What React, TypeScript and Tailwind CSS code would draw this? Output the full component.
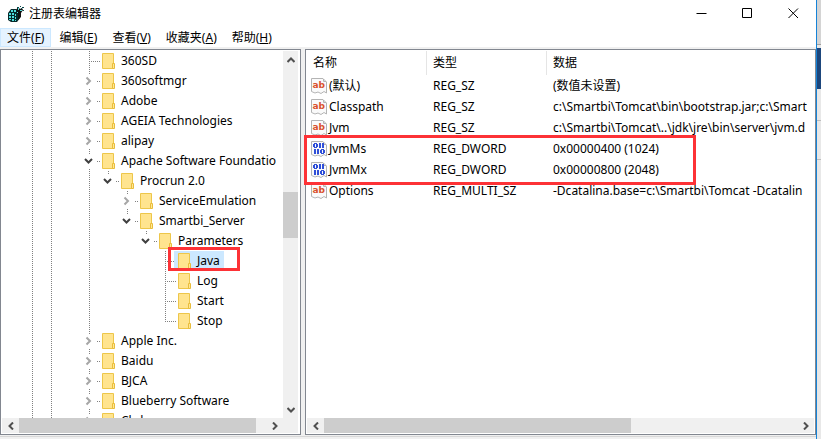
import React from "react";

type Branch = "leaf" | "open" | "closed";
type Node = { name: string; depth: number; branch: Branch; up: boolean; down: boolean; selected?: boolean };

const nodes: Node[] = [
  { name: "360SD", depth: 0, branch: "leaf", up: true, down: true },
  { name: "360softmgr", depth: 0, branch: "closed", up: true, down: true },
  { name: "Adobe", depth: 0, branch: "closed", up: true, down: true },
  { name: "AGEIA Technologies", depth: 0, branch: "closed", up: true, down: true },
  { name: "alipay", depth: 0, branch: "closed", up: true, down: true },
  { name: "Apache Software Foundatio", depth: 0, branch: "open", up: true, down: true },
  { name: "Procrun 2.0", depth: 1, branch: "open", up: true, down: false },
  { name: "ServiceEmulation", depth: 2, branch: "closed", up: true, down: true },
  { name: "Smartbi_Server", depth: 2, branch: "open", up: true, down: false },
  { name: "Parameters", depth: 3, branch: "open", up: true, down: false },
  { name: "Java", depth: 4, branch: "leaf", up: true, down: true, selected: true },
  { name: "Log", depth: 4, branch: "leaf", up: true, down: true },
  { name: "Start", depth: 4, branch: "leaf", up: true, down: true },
  { name: "Stop", depth: 4, branch: "leaf", up: true, down: false },
  { name: "Apple Inc.", depth: 0, branch: "closed", up: true, down: true },
  { name: "Baidu", depth: 0, branch: "closed", up: true, down: true },
  { name: "BJCA", depth: 0, branch: "closed", up: true, down: true },
  { name: "Blueberry Software", depth: 0, branch: "closed", up: true, down: true },
  { name: "Chd", depth: 0, branch: "closed", up: true, down: true },
];

const values = [
  { name: "(默认)", type: "REG_SZ", data: "(数值未设置)" },
  { name: "Classpath", type: "REG_SZ", data: "c:\\Smartbi\\Tomcat\\bin\\bootstrap.jar;c:\\Smart" },
  { name: "Jvm", type: "REG_SZ", data: "c:\\Smartbi\\Tomcat\\..\\jdk\\jre\\bin\\server\\jvm.d" },
  { name: "JvmMs", type: "REG_DWORD", data: "0x00000400 (1024)" },
  { name: "JvmMx", type: "REG_DWORD", data: "0x00000800 (2048)" },
  { name: "Options", type: "REG_MULTI_SZ", data: "-Dcatalina.base=c:\\Smartbi\\Tomcat -Dcatalin" },
];

const menus = [
  ["文件", "F"],
  ["编辑", "E"],
  ["查看", "V"],
  ["收藏夹", "A"],
  ["帮助", "H"],
];

function Guide({ line }: { line: boolean }) {
  return (
    <svg className="h-5 w-[19px] shrink-0" viewBox="0 0 19 20" shapeRendering="crispEdges" aria-hidden="true">
      {line && <path d="M9.5 0V20" stroke="#808080" strokeDasharray="1 1" />}
    </svg>
  );
}

function Joint({ branch, up, down }: { branch: Branch; up: boolean; down: boolean }) {
  const leaf = branch === "leaf";
  return (
    <svg className="h-5 w-[22px] shrink-0" viewBox="0 0 22 20" fill="none" aria-hidden="true">
      <g stroke="#808080" strokeDasharray="1 1" shapeRendering="crispEdges">
        {up && <path d={leaf ? "M9.5 0V11" : "M9.5 0V3"} />}
        {down && <path d={leaf ? "M9.5 10V20" : "M9.5 18V20"} />}
        <path d={leaf ? "M9 10.5H21" : "M17 10.5H21"} />
      </g>
      {branch === "closed" && <path d="M6.500 6.500L10 10L6.500 13.500" stroke="#a6a6a6" strokeWidth="2" />}
      {branch === "open" && <path d="M5 8L8.500 11.500L12 8" stroke="#404040" strokeWidth="2" />}
    </svg>
  );
}

function Folder() {
  return (
    <svg className="h-4 w-[14px] shrink-0" viewBox="0 0 14 16" aria-hidden="true">
      <path d="M.5.5H11.500V15.500H.5Z" fill="#ffe48f" stroke="#edc64a" />
      <path d="M10.500 10.500H12.500V15.500H10.500Z" fill="#ffe795" stroke="#e9bd3c" />
    </svg>
  );
}

function ValueIcon({ binary }: { binary: boolean }) {
  return (
    <svg className="h-4 w-4 shrink-0" viewBox="0 0 16 16" aria-hidden="true">
      <path d="M.5.5H12L15.500 4V15L13 13.500L10 15.500L7 14L4 15L.5 13.500Z" fill="#fafafa" stroke="#b4b4b4" />
      <path d="M12.500 1V3.500H15" fill="none" stroke="#b4b4b4" />
      {binary ? (
        <g fill="#2f4fd8" shapeRendering="crispEdges">
          <path
            fillRule="evenodd"
            d="M3 2H6V3H7V6H6V7H3V6H2V3H3ZM4 3V6H5V3ZM8 2H10V7H8ZM11 2H13V7H11ZM3 8H5V13H3ZM6 8H8V13H6ZM10 8H13V9H14V12H13V13H10V12H9V9H10ZM11 9V12H12V9Z"
          />
        </g>
      ) : (
        <text x="1.500" y="10" fill="#d9512c" className="font-['DejaVu_Sans',sans-serif] text-[9px] font-bold">
          ab
        </text>
      )}
    </svg>
  );
}

function Arrow({ d, label, className }: { d: string; label: string; className: string }) {
  return (
    <button type="button" aria-label={label} className={`flex shrink-0 items-center justify-center ${className}`}>
      <svg className="h-2 w-2" viewBox="0 0 8 8" fill="none" aria-hidden="true">
        <path d={d} stroke="#505050" strokeWidth="2" />
      </svg>
    </button>
  );
}

const LEFT = "M6 .5L2.500 4L6 7.500";
const RIGHT = "M2 .5L5.500 4L2 7.500";
const UP = "M.5 6L4 2.500L7.500 6";
const DOWN = "M.5 2L4 5.500L7.500 2";

function Logo() {
  return (
    <svg className="h-4 w-4" viewBox="0 0 16 16" aria-hidden="true">
      <path d="M0 7L3 3H8L12 6V12L9 16H3L0 14Z" fill="#062a2c" />
      <path
        d="M1 7H3V9H1ZM4 7H6V9H4ZM7 8H8V10H7ZM1 10H3V12H1ZM4 10H6V12H4ZM7 11H8V13H7ZM1 13H3V14H1ZM4 13H6V15H4ZM7 14H8V15H7ZM3 4H5V6H3ZM6 4H8V6H6Z"
        fill="#4fdede"
      />
      <path d="M8 4L10 1L12 3L14 2L15 4L13 7V11L10 14V8Z" fill="#111" />
      <path d="M10 2H11V4H10ZM12 4H14V5H12ZM9 6H10V7H9Z" fill="#5ee0e0" />
      <path d="M9 1H11V2H9ZM12 0H13V1H12ZM14 1H16V2H14ZM13 2H14V3H13ZM15 4H16V5H15Z" fill="#0c4c4e" />
    </svg>
  );
}

export default function App() {
  return (
    <div className="flex h-screen overflow-hidden bg-[#f0f0f0] font-['Noto_Sans','Noto_Sans_CJK_SC',sans-serif] text-[12px] leading-5 text-black">
      <main className="flex min-w-0 flex-1 flex-col border-r border-[#1583d8]">
        <header className="flex h-7 shrink-0 items-start justify-between bg-white pl-2">
          <div className="flex items-center gap-[5px] pt-1">
            <Logo />
            <h1>注册表编辑器</h1>
          </div>
          <div className="flex">
            {[
              ["最小化", "M.5 5.500H10.500"],
              ["最大化", "M.5.5H9.500V9.500H.5Z"],
              ["关闭", "M.5.5L10 10M10 .5L.5 10"],
            ].map(([label, d]) => (
              <button key={label} type="button" aria-label={label} className="flex h-[27px] w-[46px] items-center justify-center">
                <svg className="h-[11px] w-[11px]" viewBox="0 0 11 11" fill="none" stroke="#000" aria-hidden="true">
                  <path d={d} />
                </svg>
              </button>
            ))}
          </div>
        </header>

        <nav className="flex h-[19px] shrink-0 gap-px bg-white">
          {menus.map(([text, key], i) => (
            <button
              key={key}
              type="button"
              className={`flex items-center border px-[6px] whitespace-nowrap ${i === 0 ? "border-[#cce8ff] bg-[#e5f3ff]" : "border-transparent"}`}
            >
              {text}(<u>{key}</u>)
            </button>
          ))}
        </nav>

        <div className="flex min-h-0 flex-1 gap-1 pt-[2px]">
          <section aria-label="注册表项" className="flex w-[301px] shrink-0 flex-col border border-[#828790] bg-white p-px pr-[2px]">
            <div className="flex min-h-0 flex-1">
              <ul role="tree" className="min-w-0 flex-1 overflow-hidden pl-[21px]">
                {nodes.map((n) => (
                  <li key={n.name} role="treeitem" aria-selected={!!n.selected} className="flex h-5 items-center whitespace-nowrap">
                    <Guide line />
                    <Guide line />
                    <Guide line={false} />
                    {Array.from({ length: n.depth }, (_, i) => (
                      <Guide key={i} line={i === 0} />
                    ))}
                    <Joint branch={n.branch} up={n.up} down={n.down} />
                    <span className={`-ml-1 flex h-5 items-center gap-[5px] pr-1 pl-1 ${n.selected ? "bg-[#cce8ff]" : ""}`}>
                      <Folder />
                      {n.name}
                    </span>
                  </li>
                ))}
              </ul>
              <div className="flex w-[15px] shrink-0 flex-col bg-[#f0f0f0]">
                <Arrow d={UP} label="向上滚动" className="h-[17px]" />
                <div className="flex-[124]" />
                <div className="flex-[46] bg-[#cdcdcd]" />
                <div className="flex-[163]" />
                <Arrow d={DOWN} label="向下滚动" className="h-[17px]" />
              </div>
            </div>
            <div className="flex h-[15px] shrink-0 bg-[#f0f0f0]">
              <Arrow d={LEFT} label="向左滚动" className="w-[17px]" />
              <div className="flex-1 bg-[#cdcdcd]" />
              <div className="w-[10px]" />
              <Arrow d={RIGHT} label="向右滚动" className="w-[17px]" />
              <div className="w-[15px]" />
            </div>
          </section>

          <section aria-label="值" className="flex min-w-0 flex-1 flex-col border border-[#828790] bg-white p-px">
            <div className="min-h-0 flex-1 overflow-hidden">
              <table className="w-full table-fixed border-separate border-spacing-0 text-left">
                <thead>
                  <tr className="h-[24px]">
                    <th className="w-[120px] border-r border-[#e5e5e5] p-0 pl-[6px] font-normal">名称</th>
                    <th className="w-[120px] border-r border-[#e5e5e5] p-0 pl-[6px] font-normal">类型</th>
                    <th className="p-0 pl-[6px] font-normal">数据</th>
                  </tr>
                </thead>
                <tbody>
                  {values.map((v) => (
                    <tr key={v.name} className="h-[21px] whitespace-nowrap">
                      <td className="p-0 pl-1">
                        <span className="flex items-center gap-[2px]">
                          <ValueIcon binary={v.type === "REG_DWORD"} />
                          {v.name}
                        </span>
                      </td>
                      <td className="p-0 pl-[6px]">{v.type}</td>
                      <td className="p-0 pl-[6px]">{v.data}</td>
                    </tr>
                  ))}
                </tbody>
              </table>
            </div>
            <div className="flex h-[15px] shrink-0 bg-[#f0f0f0]">
              <Arrow d={LEFT} label="向左滚动" className="w-[17px]" />
              <div className="flex-[307] bg-[#cdcdcd]" />
              <div className="flex-[166]" />
              <Arrow d={RIGHT} label="向右滚动" className="w-[17px]" />
            </div>
          </section>
        </div>
        <footer className="mt-px h-[3px] shrink-0 border-t border-[#d7d7d7]" />
      </main>

      <aside className="flex w-1 shrink-0 flex-col bg-[#e8e8e8]">
        <div className="h-[45px] border-b border-[#a0a0a0] bg-[#d4d4d4]" />
        <div className="mt-[3px] h-[41px] bg-[#1d467c]" />
        <div className="h-8 border-b border-[#bdbdbd]" />
        <div className="h-[39px] border-b border-[#bdbdbd]" />
      </aside>

      <div className="pointer-events-none absolute top-[247px] left-[168px] h-[24px] w-[72px] border-3 border-[#fd3236]" />
      <div className="pointer-events-none absolute top-[135px] left-[304px] h-[50px] w-[392px] border-3 border-[#fd3236]" />
    </div>
  );
}
